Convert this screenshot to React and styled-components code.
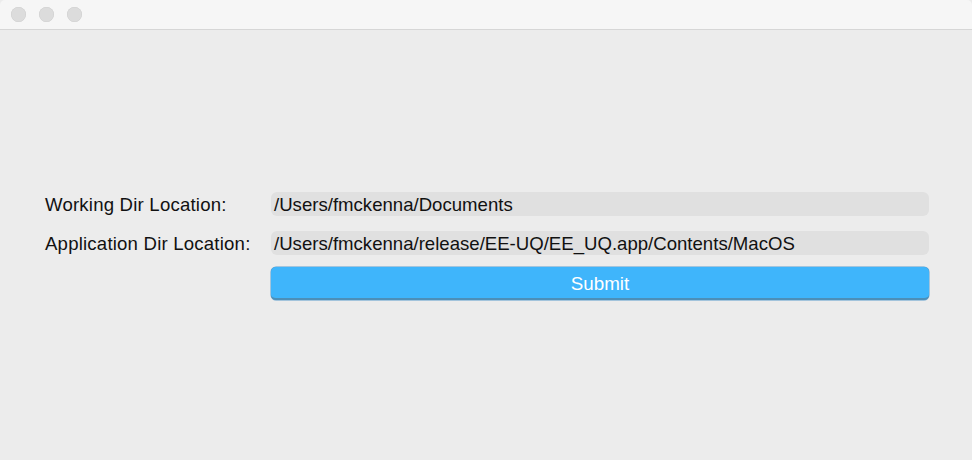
import React from "react";
import styled, { createGlobalStyle } from "styled-components";

const GlobalStyle = createGlobalStyle`
  html, body {
    margin: 0;
    padding: 0;
    background: #ececec;
  }
  body {
    font-family: "Liberation Sans", Arial, sans-serif;
  }
`;

const Window = styled.div`
  width: 972px;
  height: 460px;
  display: flex;
  flex-direction: column;
  background: #ececec;
  overflow: hidden;
  border-radius: 5px 5px 0 0;
`;

const TitleBar = styled.div`
  height: 29px;
  flex-shrink: 0;
  background: #f6f6f6;
  border-bottom: 1px solid #d6d6d6;
  display: flex;
  align-items: center;
  gap: 13px;
  padding-left: 11px;
`;

const Light = styled.span`
  width: 15px;
  height: 15px;
  border-radius: 50%;
  background: #dcdcdc;
  box-shadow: inset 0 0 0 0.5px #cfcfcf;
`;

const Body = styled.div`
  flex: 1;
  display: flex;
  align-items: center;
  padding: 0 43px 0 45px;
`;

const Form = styled.div`
  width: 100%;
  display: grid;
  grid-template-columns: 226px 1fr;
  row-gap: 15px;
  align-items: center;
  margin-top: 1px;
`;

const Label = styled.div`
  box-sizing: border-box;
  height: 24px;
  font-size: 18.6px;
  letter-spacing: 0.2px;
  color: #111;
  line-height: 25px;
  white-space: nowrap;
`;

const Field = styled.div`
  height: 24px;
  line-height: 25px;
  background: #e0e0e0;
  border-radius: 6px;
  padding-left: 3px;
  font-size: 18.6px;
  color: #111;
  white-space: nowrap;
  overflow: hidden;
`;

const Submit = styled.button`
  grid-column: 2;
  margin-top: -3px;
  height: 33px;
  border: none;
  border-radius: 5px;
  background: #3fb5fb;
  border-bottom: 2px solid #4c8fb8;
  box-shadow: 0 0 0 0.5px #5a9ccb;
  color: #fff;
  font-family: "Liberation Sans", Arial, sans-serif;
  font-size: 18.8px;
  padding: 3px 0 0;
`;

export default function App() {
  return (
    <>
      <GlobalStyle />
      <Window>
        <TitleBar>
          <Light />
          <Light />
          <Light />
        </TitleBar>
        <Body>
          <Form>
            <Label>Working Dir Location:</Label>
            <Field>/Users/fmckenna/Documents</Field>
            <Label>Application Dir Location:</Label>
            <Field>/Users/fmckenna/release/EE-UQ/EE_UQ.app/Contents/MacOS</Field>
            <Submit>Submit</Submit>
          </Form>
        </Body>
      </Window>
    </>
  );
}
